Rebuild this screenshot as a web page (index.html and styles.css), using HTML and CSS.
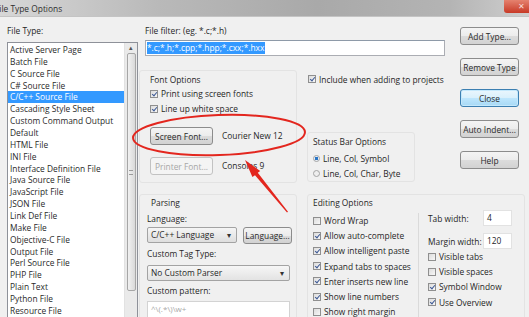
FILE: index.html
```html
<!DOCTYPE html>
<html>
<head>
    <title>File Type Options</title>
    <link rel="stylesheet" href="styles.css">
</head>
<body>
    <div class="titlebar">
        <span class="title">File Type Options</span>
        <span class="close">&#x2715;</span>
    </div>
    <div class="dialog">
        <div class="types">
            <div class="label">File Type:</div>
            <div class="listbox">
                <ul class="items">
                    <li>Active Server Page</li>
                    <li>Batch File</li>
                    <li>C Source File</li>
                    <li>C# Source File</li>
                    <li class="selected">C/C++ Source File</li>
                    <li>Cascading Style Sheet</li>
                    <li>Custom Command Output</li>
                    <li>Default</li>
                    <li>HTML File</li>
                    <li>INI File</li>
                    <li>Interface Definition File</li>
                    <li>Java Source File</li>
                    <li>JavaScript File</li>
                    <li>JSON File</li>
                    <li>Link Def File</li>
                    <li>Make File</li>
                    <li>Objective-C File</li>
                    <li>Output File</li>
                    <li>Perl Source File</li>
                    <li>PHP File</li>
                    <li>Plain Text</li>
                    <li>Python File</li>
                    <li>Resource File</li>
                </ul>
                <div class="vscroll">
                    <span class="up">&#x25B4;</span>
                    <div class="thumb"><span class="grip"></span></div>
                </div>
            </div>
        </div>

        <div class="content">
            <div class="filter">
                <div class="label">File filter: (eg. *.c;*.h)</div>
                <div class="textbox"><span class="sel">*.c;*.h;*.cpp;*.hpp;*.cxx;*.hxx</span></div>
            </div>

            <div class="buttons">
                <button class="btn">Add Type...</button>
                <button class="btn">Remove Type</button>
                <button class="btn default">Close</button>
                <button class="btn">Auto Indent...</button>
                <button class="btn">Help</button>
            </div>

            <div class="panel font-panel">
                <div class="heading">Font Options</div>
                <div class="check"><span class="cb on"></span>Print using screen fonts</div>
                <div class="check"><span class="cb on"></span>Line up white space</div>
                <div class="font-row first">
                    <button class="btn small">Screen Font...</button>
                    <span>Courier New 12</span>
                </div>
                <div class="font-row">
                    <button class="btn small" disabled>Printer Font...</button>
                    <span>Consolas 9</span>
                </div>
            </div>

            <div class="middle">
                <div class="check include"><span class="cb on"></span>Include when adding to projects</div>
                <div class="panel status-panel">
                    <div class="heading">Status Bar Options</div>
                    <div class="check"><span class="rb on"></span>Line, Col, Symbol</div>
                    <div class="check"><span class="rb"></span>Line, Col, Char, Byte</div>
                </div>
            </div>

            <div class="panel parse-panel">
                <div class="heading">Parsing</div>
                <div class="field-label">Language:</div>
                <div class="lang-row">
                    <div class="combo lang">C/C++ Language<span class="drop">&#x25BE;</span></div>
                    <button class="btn lang-btn">Language...</button>
                </div>
                <div class="field-label">Custom Tag Type:</div>
                <div class="combo wide">No Custom Parser<span class="drop">&#x25BE;</span></div>
                <div class="field-label">Custom pattern:</div>
                <div class="textbox pattern">^\(.*\)\w+</div>
            </div>

            <div class="panel edit-panel">
                <div class="heading">Editing Options</div>
                <div class="edit-cols">
                    <div class="edit-left">
                        <div class="check"><span class="cb"></span>Word Wrap</div>
                        <div class="check"><span class="cb on"></span>Allow auto-complete</div>
                        <div class="check"><span class="cb on"></span>Allow intelligent paste</div>
                        <div class="check"><span class="cb on"></span>Expand tabs to spaces</div>
                        <div class="check"><span class="cb on"></span>Enter inserts new line</div>
                        <div class="check"><span class="cb on"></span>Show line numbers</div>
                        <div class="check"><span class="cb"></span>Show right margin</div>
                    </div>
                    <div class="edit-right">
                        <div class="num-row tab"><span>Tab width:</span><span class="num">4</span></div>
                        <div class="num-row"><span>Margin width:</span><span class="num">120</span></div>
                        <div class="check"><span class="cb"></span>Visible tabs</div>
                        <div class="check"><span class="cb"></span>Visible spaces</div>
                        <div class="check"><span class="cb on"></span>Symbol Window</div>
                        <div class="check"><span class="cb on"></span>Use Overview</div>
                    </div>
                </div>
            </div>
        </div>
    </div>

    <!-- red annotation drawn over the dialog -->
    <svg class="markup" width="529" height="317" viewBox="0 0 529 317">
        <ellipse cx="219" cy="135" rx="86" ry="20" transform="rotate(-2 219 135)" fill="none" stroke="#e3261e" stroke-width="2"/>
        <polygon points="245,160 252.4,177.1 255,175.2 287,212.5 288,211.8 257.8,172.8 260.2,170.9" fill="#e3261e"/>
    </svg>
</body>
</html>
```

FILE: styles.css
```css
body {
    margin: 0;
    width: 529px;
    height: 317px;
    overflow: hidden;
    background: #f0f0f0;
    font-family: "Open Sans", "Liberation Sans", sans-serif;
    font-size: 8.4px;
    color: #262626;
    position: relative;
}
.titlebar {
    height: 17px;
    display: flex;
    align-items: center;
    justify-content: space-between;
    background: linear-gradient(90deg, #d7d7d7 0%, #b9b9b9 30%, #a9a9a9 60%, #b4b4b4 85%, #cfcfcf 100%);
    border-bottom: 1px solid #c4c4c4;
    box-sizing: border-box;
}
.title {
    margin-left: -5px;
    color: #2e2e2e;
}
.close {
    align-self: flex-start;
    width: 25px;
    height: 13px;
    background: linear-gradient(#e5826f, #c83a27);
    color: #f6dcd6;
    font-size: 8px;
    text-align: right;
    padding-right: 4px;
    box-sizing: border-box;
    line-height: 12px;
    border-bottom-left-radius: 3px;
}
.dialog {
    display: flex;
    padding: 7px 0 0 7px;
}
.label {
    height: 14px;
    line-height: 14px;
}
.types {
    width: 131px;
}
.types .label {
    margin-bottom: 4px;
}
.listbox {
    height: 300px;
    border: 1px solid #8e9199;
    background: #fff;
    display: flex;
    box-sizing: border-box;
}
.items {
    list-style: none;
    margin: 0;
    padding: 1px 0 0 0;
    flex: 1;
}
.items li {
    height: 11.86px;
    line-height: 11.86px;
    padding-left: 2px;
    white-space: nowrap;
    color: #2a2a2a;
}
.items li.selected {
    background: #3399ff;
    color: #fff;
}
.vscroll {
    width: 12px;
    background: #eaeaea;
    border-left: 1px solid #e2e2e2;
    display: flex;
    flex-direction: column;
    align-items: center;
}
.up {
    font-size: 7px;
    line-height: 10px;
    color: #555;
}
.thumb {
    width: 9px;
    height: 238px;
    border: 1px solid #a6a6a6;
    border-radius: 2px;
    background: linear-gradient(90deg, #f1f1f1, #d9d9d9);
    box-sizing: border-box;
    display: flex;
    align-items: center;
    justify-content: center;
}
.grip {
    width: 4px;
    height: 5px;
    border-top: 1px solid #9a9a9a;
    border-bottom: 1px solid #9a9a9a;
    box-sizing: border-box;
}
.content {
    margin-left: 1px;
    display: grid;
    grid-template-columns: 158px 10px 138px 15px 59px;
    grid-template-rows: 46px 123px auto;
}
.filter {
    grid-column: 1 / 4;
    grid-row: 1;
    padding-left: 6px;
}
.textbox {
    height: 16px;
    margin-top: 2px;
    background: #fff;
    border: 1px solid #abadb3;
    border-top-color: #8e9aa8;
    box-sizing: border-box;
    padding: 1px 1px;
    line-height: 12px;
    white-space: nowrap;
    overflow: hidden;
}
.sel {
    background: #3399ff;
    color: #fff;
    display: inline-block;
    padding-right: 1px;
}
.buttons {
    grid-column: 5;
    grid-row: 1 / 3;
    display: flex;
    flex-direction: column;
    gap: 13px;
    padding-top: 3px;
}
.btn {
    font-family: inherit;
    font-size: 8.4px;
    color: #2a2a2a;
    height: 18px;
    padding: 0;
    border: 1px solid #8c8c8c;
    border-radius: 3px;
    background: linear-gradient(#f4f4f4 0%, #ececec 50%, #dcdcdc 51%, #d2d2d2 100%);
}
.btn.default {
    border-color: #3c7fb1;
    background: linear-gradient(#eaf6fd 0%, #d9f0fc 50%, #bee6fd 51%, #a7d9f5 100%);
    box-shadow: inset 0 0 0 1px #c4e8fc;
}
.btn:disabled {
    color: #a7a7a7;
    border-color: #c2c2c2;
    background: #f4f4f4;
}
.panel {
    border: 1px solid #e3e3e3;
    border-radius: 3px;
    box-sizing: border-box;
}
.heading {
    height: 12px;
    line-height: 12px;
}
.check {
    display: flex;
    align-items: center;
    white-space: nowrap;
}
.cb {
    width: 8px;
    height: 8px;
    border: 1px solid #8f8f8f;
    background: linear-gradient(135deg, #dcdcdc, #f7f7f7);
    box-sizing: border-box;
    margin-right: 3px;
    position: relative;
    flex: none;
}
.cb.on::after {
    content: "";
    position: absolute;
    left: 2px;
    top: 0px;
    width: 2px;
    height: 4px;
    border-right: 1.4px solid #3d5a96;
    border-bottom: 1.4px solid #3d5a96;
    transform: rotate(40deg);
}
.rb {
    width: 7px;
    height: 7px;
    border: 1px solid #a4a4a4;
    border-radius: 50%;
    background: #eeeeee;
    margin-right: 3px;
    box-sizing: border-box;
    flex: none;
}
.rb.on {
    background: radial-gradient(circle, #2a76c6 0 45%, #e8eef5 55%);
}
.font-panel {
    grid-column: 1;
    grid-row: 2;
    height: 113px;
    padding: 3px 0 0 10px;
}
.font-panel .check {
    height: 15px;
}
.font-panel .check:first-of-type {
    margin-top: 4px;
}
.font-row {
    display: flex;
    align-items: center;
    gap: 9px;
    margin-top: 12px;
}
.font-row span {
    margin-top: -1px;
}
.font-row.first {
    margin-top: 11px;
}
.btn.small {
    width: 63px;
}
.middle {
    grid-column: 3;
    grid-row: 2;
}
.include {
    height: 12px;
    margin-top: 3px;
    margin-left: 1px;
}
.status-panel {
    width: 108px;
    height: 50px;
    margin-top: 47px;
    padding: 3px 0 0 5px;
}
.status-panel .check {
    height: 15px;
}
.status-panel .heading {
    margin-bottom: 3px;
}
.parse-panel {
    grid-column: 1;
    grid-row: 3;
    height: 140px;
    margin-top: 1px;
    padding: 2px 0 0 7px;
}
.parse-panel .heading {
    padding-left: 4px;
}
.field-label {
    height: 12px;
    line-height: 12px;
    margin-top: 4px;
}
.lang-row {
    display: flex;
    gap: 6px;
    margin-top: 2px;
}
.combo {
    height: 16px;
    line-height: 14px;
    border: 1px solid #a3a3a3;
    border-radius: 2px;
    background: linear-gradient(#f5f5f5, #dedede);
    box-sizing: border-box;
    padding-left: 3px;
    display: flex;
    justify-content: space-between;
}
.combo.lang {
    width: 90px;
}
.combo.wide {
    width: 143px;
    margin-top: 5px;
    background: linear-gradient(#f6f6f6, #e3e3e3);
}
.drop {
    font-size: 8px;
    padding-right: 5px;
    color: #333;
}
.lang-btn {
    width: 49px;
    height: 17px;
}
.pattern {
    width: 143px;
    height: 18px;
    margin-top: 4px;
    color: #a8a8a8;
    padding-left: 3px;
    font-size: 8px;
    border-color: #d3d3d3;
}
.edit-panel {
    grid-column: 3 / 6;
    grid-row: 3;
    margin-top: 1px;
    height: 130px;
    margin-right: -6px;
    padding: 2px 0 0 5px;
}
.edit-cols {
    display: flex;
    margin-top: 4px;
}
.edit-left {
    width: 105px;
    border-right: 1px solid #dadada;
}
.edit-left .check,
.edit-right .check {
    height: 15.2px;
}
.edit-right {
    padding-left: 9px;
    margin-top: -3px;
    flex: 1;
}
.num-row {
    display: flex;
    align-items: center;
    height: 16px;
    white-space: nowrap;
}
.num-row.tab {
    margin-bottom: 7px;
}
.num {
    flex: none;
    width: 29px;
    height: 16px;
    line-height: 14px;
    margin-left: auto;
    margin-right: 12px;
    background: #fff;
    border: 1px solid #e2e2e2;
    box-sizing: border-box;
    padding-left: 3px;
}
.edit-right .check:first-of-type {
    margin-top: 10px;
}
.markup {
    position: absolute;
    left: 0;
    top: 0;
    pointer-events: none;
}
```
